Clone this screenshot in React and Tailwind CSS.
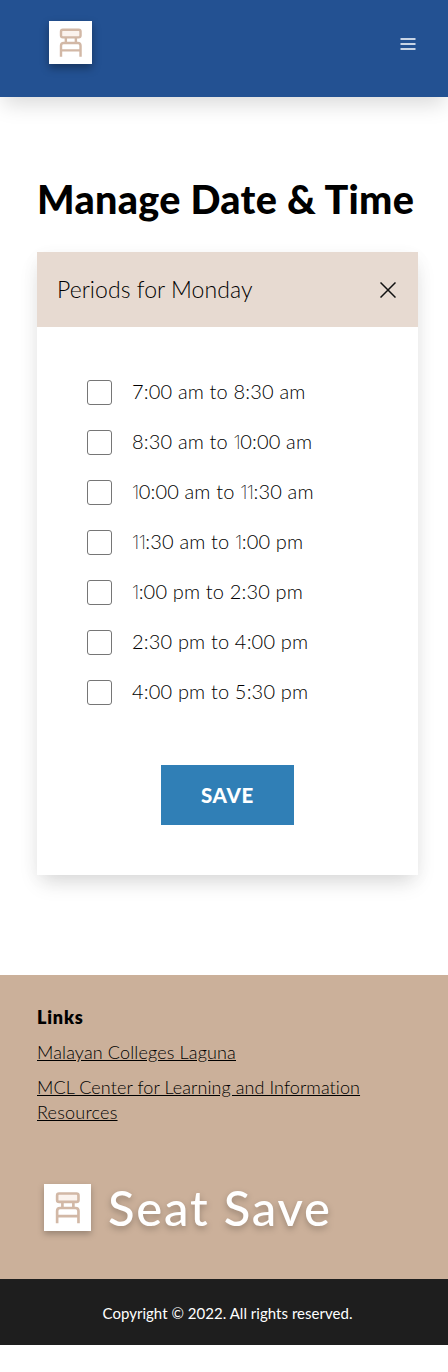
const periods = [
  "7:00 am to 8:30 am",
  "8:30 am to 10:00 am",
  "10:00 am to 11:30 am",
  "11:30 am to 1:00 pm",
  "1:00 pm to 2:30 pm",
  "2:30 pm to 4:00 pm",
  "4:00 pm to 5:30 pm",
];

// The figure 1 is set in a face where it is narrow and has no foot.
function Period({ text }) {
  return (
    <span className="relative -top-0.5 whitespace-pre tracking-[0.17px]">
      {text.split(/(1)/).map((part, i) =>
        part === "1" ? <span key={i} className="-mr-[0.6px] font-['Inter'] text-[19px] font-extralight leading-none tracking-[0px] text-black/80">1</span> : part
      )}
    </span>
  );
}

function Chair({ className }) {
  return (
    <svg viewBox="0 0 48 48" className={className} fill="none" stroke="#d2b8a6" strokeWidth="2.7">
      <rect width="48" height="48" fill="#fff" stroke="none" />
      <rect x="13.4" y="9.7" width="21.8" height="8.6" rx="2" fill="#fbf3ee" />
      <path d="M18.8 18.5v6M30 18.5v6M13.4 40V27.500q0-3 3-3h15.800q3 0 3 3V40M13.400 32.800h21.800" />
    </svg>
  );
}

export default function App() {
  return (
    <div className="min-h-[1372px] bg-white font-['Lato',sans-serif] text-black">
      <header className="flex h-[97px] items-start justify-between bg-[#235192] pl-[49px] pr-[32px] shadow-[0_10px_20px_-3px_rgba(0,0,0,0.15)]">
        <Chair className="mt-[21px] size-[43px] drop-shadow-[0_4px_4px_rgba(0,0,0,0.35)]" />
        <svg viewBox="0 0 16 12" className="mt-[38px] h-3 w-4" fill="#c8d4e5">
          <path d="M.5 0h15v2H.5zM.5 5h15v2H.5zM.5 10h15v2H.5z" />
        </svg>
      </header>
      <main className="pb-[100px] pl-[37px] pr-[30px] pt-[77px]">
        <h1 className="h-[78px] whitespace-nowrap text-[39.5px] font-black leading-[50px] tracking-[0.33px]">Manage Date &amp; Time</h1>
        <section className="h-[623px] bg-white shadow-[0_10px_20px_-4px_rgba(0,0,0,0.15),0_4px_20px_rgba(0,0,0,0.03)]">
          <div className="flex h-[75px] items-center justify-between bg-[#e7dad1] pl-5 pr-[22px]">
            <h2 className="pb-px text-[23px] font-light tracking-[0.05px]">Periods for Monday</h2>
            <svg viewBox="0 0 16 16" className="size-4" stroke="#111" strokeWidth="1.5"><path d="M.5.5l15 15M15.500.5l-15 15" /></svg>
          </div>
          <div className="flex flex-col gap-[25px] pl-[50px] pt-[53px]">
            {periods.map((p) => (
              <label key={p} className="flex h-[25px] items-center gap-5 text-xl font-light">
                <span className="size-[25px] rounded-[3px] border border-[#767676] bg-white" />
                <Period text={p} />
              </label>
            ))}
          </div>
          <button className="mx-auto mt-[60px] flex h-[60px] w-[133px] items-center justify-center bg-[#307fb6] text-[20.5px] font-black tracking-[0.7px] text-white">SAVE</button>
        </section>
      </main>
      <footer>
        <div className="h-[304px] bg-[#cbb09a] pl-[37px] pt-[30px] text-lg leading-[25px]">
          <h3 className="font-extrabold tracking-[0.8px]">Links</h3>
          <p className="mt-[10px] font-light tracking-[0.15px] underline">Malayan Colleges Laguna</p>
          <p className="mt-[10px] font-light tracking-[0.08px] underline">MCL Center for Learning and Information<br /><span className="tracking-[0.22px]">Resources</span></p>
          <div className="mt-[59px] flex items-center gap-[17px] pl-[7px] text-white drop-shadow-[0_3px_3px_rgba(0,0,0,0.25)]">
            <Chair className="size-[47px]" />
            <span className="whitespace-nowrap text-[49px] font-medium leading-[47px] tracking-[1.8px]">Seat Save</span>
          </div>
        </div>
        <div className="flex h-[66px] items-center justify-center bg-[#1e1e1e] pl-[7px] pt-[3px] text-[15px] tracking-[0.03px] text-white">Copyright © 2022. All rights reserved.</div>
      </footer>
    </div>
  );
}
